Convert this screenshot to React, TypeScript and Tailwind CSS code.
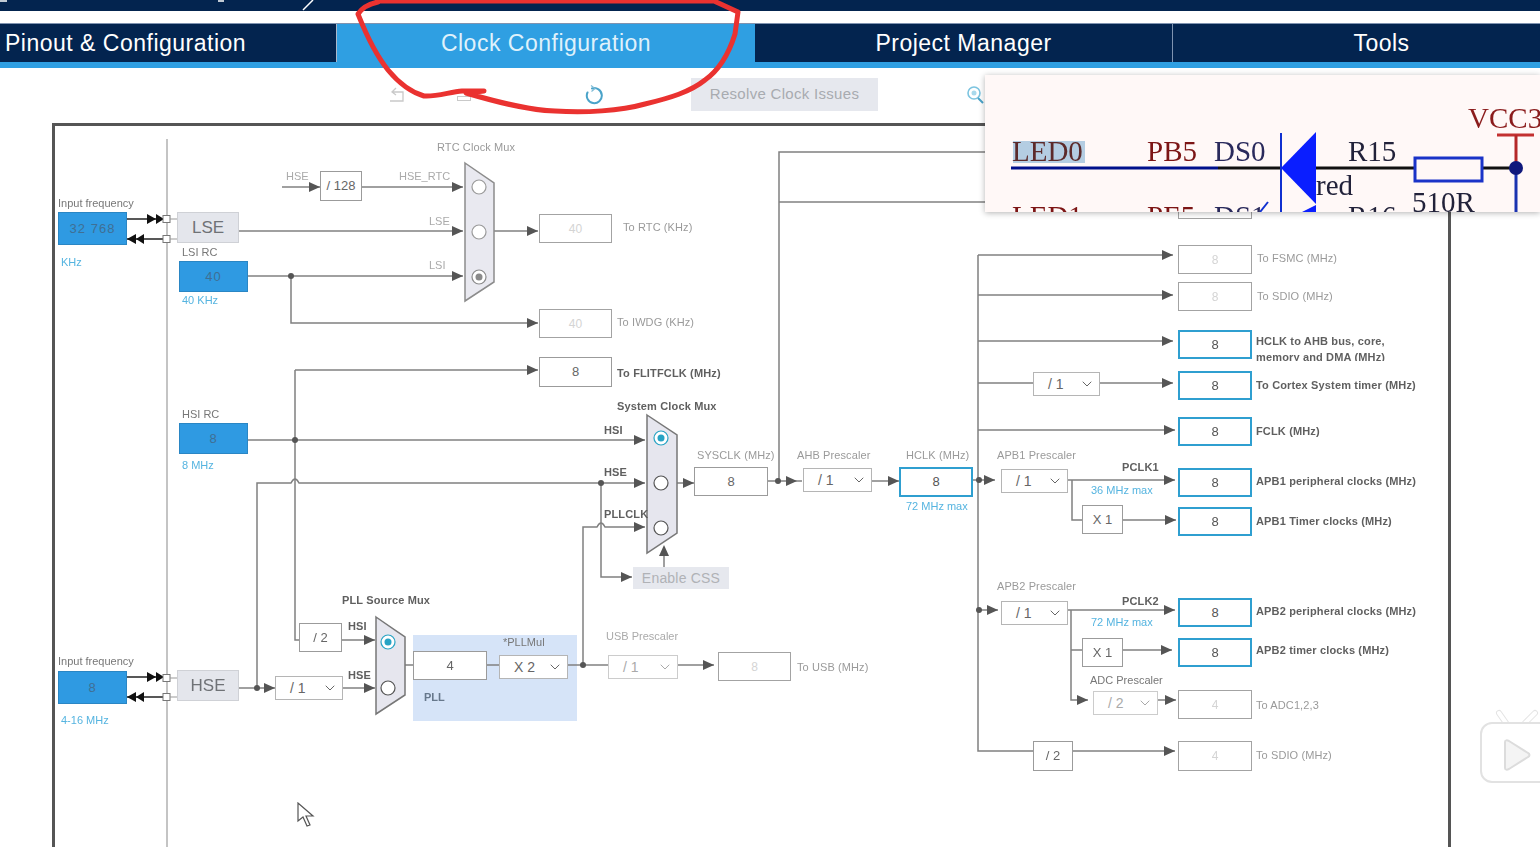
import { ChevronDown } from "lucide-react"

type BoxKind = "input" | "source" | "plain" | "off" | "on" | "select" | "selectOff" | "action"

interface NodeBox {
  x: number
  y: number
  w: number
  h: number
  text: string
  kind: BoxKind
}

const boxStyles: Record<BoxKind, string> = {
  input: "bg-[#2f9ae2] border border-[#2a86c4] text-[#3f6f94] text-[13px] tracking-[1px]",
  source: "bg-[#e4e6ec] border border-[#cfd1d6] text-[#6f7276] text-[17px]",
  plain: "bg-white border border-[#9b9b9b] text-[#666] text-[13px]",
  off: "bg-white border border-[#a3a3a3] text-[#d4d4d4] text-[12px]",
  on: "bg-white border-[2px] border-[#2f9fd0] text-[#555] text-[13px]",
  select: "bg-white border border-[#b5b5b5] text-[#666] text-[14px] justify-between pl-[14px] pr-[4px]",
  selectOff: "bg-white border border-[#cccccc] text-[#aaa] text-[14px] justify-between pl-[14px] pr-[4px]",
  action: "bg-[#e6e8ee] text-[#b0b2b6] text-[14px] tracking-[0.2px]",
}

const boxes: NodeBox[] = [
  { x: 58, y: 212, w: 69, h: 33, text: "32 768", kind: "input" },
  { x: 177, y: 212, w: 62, h: 31, text: "LSE", kind: "source" },
  { x: 179, y: 261, w: 69, h: 31, text: "40", kind: "input" },
  { x: 320, y: 171, w: 42, h: 30, text: "/ 128", kind: "plain" },
  { x: 539, y: 214, w: 73, h: 29, text: "40", kind: "off" },
  { x: 539, y: 309, w: 73, h: 29, text: "40", kind: "off" },
  { x: 539, y: 357, w: 73, h: 30, text: "8", kind: "plain" },
  { x: 179, y: 423, w: 69, h: 31, text: "8", kind: "input" },
  { x: 694, y: 467, w: 74, h: 29, text: "8", kind: "plain" },
  { x: 899, y: 467, w: 74, h: 30, text: "8", kind: "on" },
  { x: 633, y: 567, w: 96, h: 22, text: "Enable CSS", kind: "action" },
  { x: 58, y: 671, w: 69, h: 33, text: "8", kind: "input" },
  { x: 177, y: 670, w: 62, h: 31, text: "HSE", kind: "source" },
  { x: 299, y: 623, w: 43, h: 29, text: "/ 2", kind: "plain" },
  { x: 413, y: 651, w: 74, h: 29, text: "4", kind: "plain" },
  { x: 718, y: 652, w: 73, h: 29, text: "8", kind: "off" },
  { x: 1178, y: 190, w: 74, h: 29, text: "", kind: "off" },
  { x: 1178, y: 245, w: 74, h: 29, text: "8", kind: "off" },
  { x: 1178, y: 282, w: 74, h: 29, text: "8", kind: "off" },
  { x: 1178, y: 330, w: 74, h: 29, text: "8", kind: "on" },
  { x: 1178, y: 371, w: 74, h: 29, text: "8", kind: "on" },
  { x: 1178, y: 417, w: 74, h: 29, text: "8", kind: "on" },
  { x: 1178, y: 468, w: 74, h: 29, text: "8", kind: "on" },
  { x: 1178, y: 507, w: 74, h: 29, text: "8", kind: "on" },
  { x: 1082, y: 505, w: 41, h: 29, text: "X 1", kind: "plain" },
  { x: 1178, y: 598, w: 74, h: 29, text: "8", kind: "on" },
  { x: 1178, y: 638, w: 74, h: 29, text: "8", kind: "on" },
  { x: 1082, y: 638, w: 41, h: 29, text: "X 1", kind: "plain" },
  { x: 1178, y: 690, w: 74, h: 29, text: "4", kind: "off" },
  { x: 1178, y: 741, w: 74, h: 30, text: "4", kind: "off" },
  { x: 1033, y: 741, w: 40, h: 30, text: "/ 2", kind: "plain" },
]

const selects: NodeBox[] = [
  { x: 275, y: 676, w: 68, h: 24, text: "/ 1", kind: "select" },
  { x: 499, y: 655, w: 69, h: 24, text: "X 2", kind: "select" },
  { x: 608, y: 655, w: 70, h: 24, text: "/ 1", kind: "selectOff" },
  { x: 803, y: 468, w: 69, h: 24, text: "/ 1", kind: "select" },
  { x: 1033, y: 372, w: 67, h: 24, text: "/ 1", kind: "select" },
  { x: 1001, y: 469, w: 67, h: 24, text: "/ 1", kind: "select" },
  { x: 1001, y: 601, w: 67, h: 24, text: "/ 1", kind: "select" },
  { x: 1093, y: 691, w: 65, h: 24, text: "/ 2", kind: "selectOff" },
]

const grey = "text-[#9a9a9a] tracking-[0.1px]"
const dark = "text-[#5f5f5f] font-semibold tracking-[0.15px]"
const mid = "text-[#777]"
const blue = "text-[#55b4e0]"
const pale = "text-[#aaa]"

const labels: { x: number; y: number; text: string; tone: string }[] = [
  { x: 437, y: 147, text: "RTC Clock Mux", tone: grey },
  { x: 286, y: 176, text: "HSE", tone: pale },
  { x: 399, y: 176, text: "HSE_RTC", tone: pale },
  { x: 429, y: 221, text: "LSE", tone: pale },
  { x: 429, y: 265, text: "LSI", tone: pale },
  { x: 58, y: 203, text: "Input frequency", tone: mid },
  { x: 61, y: 262, text: "KHz", tone: blue },
  { x: 182, y: 252, text: "LSI RC", tone: mid },
  { x: 182, y: 300, text: "40 KHz", tone: blue },
  { x: 623, y: 227, text: "To RTC (KHz)", tone: grey },
  { x: 617, y: 322, text: "To IWDG (KHz)", tone: grey },
  { x: 617, y: 373, text: "To FLITFCLK (MHz)", tone: dark },
  { x: 617, y: 406, text: "System Clock Mux", tone: dark },
  { x: 182, y: 414, text: "HSI RC", tone: mid },
  { x: 182, y: 465, text: "8 MHz", tone: blue },
  { x: 604, y: 430, text: "HSI", tone: dark },
  { x: 604, y: 472, text: "HSE", tone: dark },
  { x: 604, y: 514, text: "PLLCLK", tone: dark },
  { x: 697, y: 455, text: "SYSCLK (MHz)", tone: grey },
  { x: 797, y: 455, text: "AHB Prescaler", tone: grey },
  { x: 906, y: 455, text: "HCLK (MHz)", tone: grey },
  { x: 906, y: 506, text: "72 MHz max", tone: blue },
  { x: 997, y: 455, text: "APB1 Prescaler", tone: grey },
  { x: 1122, y: 467, text: "PCLK1", tone: dark },
  { x: 1091, y: 490, text: "36 MHz max", tone: blue },
  { x: 1257, y: 258, text: "To FSMC (MHz)", tone: grey },
  { x: 1257, y: 296, text: "To SDIO (MHz)", tone: grey },
  { x: 1256, y: 385, text: "To Cortex System timer (MHz)", tone: dark },
  { x: 1256, y: 431, text: "FCLK (MHz)", tone: dark },
  { x: 1256, y: 481, text: "APB1 peripheral clocks (MHz)", tone: dark },
  { x: 1256, y: 521, text: "APB1 Timer clocks (MHz)", tone: dark },
  { x: 997, y: 586, text: "APB2 Prescaler", tone: grey },
  { x: 1122, y: 601, text: "PCLK2", tone: dark },
  { x: 1091, y: 622, text: "72 MHz max", tone: blue },
  { x: 1256, y: 611, text: "APB2 peripheral clocks (MHz)", tone: dark },
  { x: 1256, y: 650, text: "APB2 timer clocks (MHz)", tone: dark },
  { x: 1090, y: 680, text: "ADC Prescaler", tone: mid },
  { x: 1256, y: 705, text: "To ADC1,2,3", tone: grey },
  { x: 1256, y: 755, text: "To SDIO (MHz)", tone: grey },
  { x: 606, y: 636, text: "USB Prescaler", tone: pale },
  { x: 797, y: 667, text: "To USB (MHz)", tone: grey },
  { x: 342, y: 600, text: "PLL Source Mux", tone: dark },
  { x: 348, y: 626, text: "HSI", tone: dark },
  { x: 348, y: 675, text: "HSE", tone: dark },
  { x: 503, y: 642, text: "*PLLMul", tone: mid },
  { x: 424, y: 697, text: "PLL", tone: "text-[#67788c] font-semibold" },
  { x: 58, y: 661, text: "Input frequency", tone: mid },
  { x: 61, y: 720, text: "4-16 MHz", tone: blue },
]

// wires in page coordinates
const wires = [
  "M282 187 H320",
  "M362 187 H463",
  "M239 231 H463",
  "M248 276 H463",
  "M291 276 V323 H538",
  "M494 231 H538",
  "M295 370 H538",
  "M295 370 V640 H299",
  "M248 440 H645",
  "M257 688 V483 H291 Q295 475 299 483 H645",
  "M239 688 H275",
  "M343 688 H375",
  "M342 640 H375",
  "M405 665 H413",
  "M487 665 H499",
  "M568 665 H608",
  "M678 665 H714",
  "M583 665 V527 H597 Q601 519 605 527 H645",
  "M601 483 V577 H632",
  "M664 567 V547",
  "M677 483 H694",
  "M768 481 H802",
  "M779 481 V152 H985",
  "M779 202 H985",
  "M872 481 H899",
  "M973 480 H995",
  "M978 255 V751 H1033",
  "M978 255 H1173",
  "M978 295 H1173",
  "M978 341 H1173",
  "M978 383 H1033",
  "M1100 383 H1173",
  "M978 430 H1175",
  "M1068 480 H1175",
  "M1072 480 V520 H1082",
  "M1123 520 H1176",
  "M978 610 H998",
  "M1068 610 H1175",
  "M1071 610 V700 H1088",
  "M1071 650 H1082",
  "M1123 650 H1172",
  "M1158 700 H1176",
  "M1073 751 H1175",
]

const arrows: [number, number][] = [
  [320, 187], [463, 187], [463, 231], [463, 276], [538, 231], [538, 323], [538, 370],
  [645, 440], [645, 483], [645, 527], [632, 577], [694, 483], [375, 640], [375, 688], [275, 688],
  [714, 665], [797, 481], [899, 481], [995, 480], [1173, 255], [1173, 295], [1173, 341], [1173, 383],
  [1175, 430], [1175, 480], [1176, 520], [998, 610], [1175, 610], [1172, 650],
  [1088, 700], [1176, 700], [1175, 751],
]

const dots: [number, number][] = [
  [291, 276], [295, 440], [601, 483], [257, 688], [583, 665], [778, 481], [979, 480], [979, 610],
]

const radios: { x: number; y: number; on: boolean; tint: string }[] = [
  { x: 479, y: 187, on: false, tint: "#9a9a9a" },
  { x: 479, y: 232, on: false, tint: "#9a9a9a" },
  { x: 479, y: 277, on: true, tint: "#8a8a8a" },
  { x: 661, y: 438, on: true, tint: "#27a3c4" },
  { x: 661, y: 483, on: false, tint: "#555" },
  { x: 661, y: 528, on: false, tint: "#555" },
  { x: 388, y: 642, on: true, tint: "#27a3c4" },
  { x: 388, y: 688, on: false, tint: "#555" },
]

const tabs = [
  { label: "Clock Configuration", active: true },
  { label: "Project Manager", active: false },
  { label: "Tools", active: false },
]

const at = (x: number, y: number) => ({ left: x - 55, top: y - 126 })

const Node = ({ box }: { box: NodeBox }) => (
  <div
    className={`absolute flex items-center justify-center ${boxStyles[box.kind]}`}
    style={{ ...at(box.x, box.y), width: box.w, height: box.h }}
  >
    {box.text}
  </div>
)

const Select = ({ box }: { box: NodeBox }) => (
  <div
    className={`absolute flex items-center ${boxStyles[box.kind]}`}
    style={{ ...at(box.x, box.y), width: box.w, height: box.h }}
  >
    <span>{box.text}</span>
    <ChevronDown size={16} strokeWidth={1.5} />
  </div>
)

const Wiring = () => (
  <svg className="absolute left-0 top-0" width={1393} height={721} viewBox="55 126 1393 721" fill="none">
    <path d="M167 139 V847" stroke="#b0b0b0" strokeWidth={1.5} />
    <rect x={413} y={635} width={164} height={86} fill="#d6e4f8" />
    {wires.map((d) => (
      <path key={d} d={d} stroke="#808080" strokeWidth={1.5} />
    ))}
    {arrows.map(([x, y]) => (
      <polygon key={`${x}-${y}`} points={`${x},${y} ${x - 11},${y - 5} ${x - 11},${y + 5}`} fill="#555" />
    ))}
    <polygon points="664,545 659,556 669,556" fill="#555" />
    {dots.map(([x, y]) => (
      <circle key={`${x}-${y}`} cx={x} cy={y} r={3} fill="#555" />
    ))}

    {/* input / output pins of the two oscillators */}
    <path d="M127 219 H167 M127 239 H167 M127 677 H167 M127 697 H167" stroke="#222" strokeWidth={1.5} />
    <polygon points="147,214 147,224 156,219 156,214 164,219 156,224 156,219" fill="#111" />
    <polygon points="127,239 136,234 136,239 144,234 144,244 136,239 136,244" fill="#111" />
    <polygon points="147,672 147,682 156,677 156,672 164,677 156,682 156,677" fill="#111" />
    <polygon points="127,697 136,692 136,697 144,692 144,702 136,697 136,702" fill="#111" />
    {[219, 239, 678, 697].map((y) => (
      <rect key={y} x={163} y={y - 3.5} width={7} height={7} fill="#fff" stroke="#777" />
    ))}
    <path d="M170 219 H177 M170 239 H177 M170 678 H177 M170 697 H177" stroke="#999" />

    {/* muxes */}
    <polygon points="465,163 494,183 494,282 465,301" fill="#e9e9f0" stroke="#8c8c8c" strokeWidth={1.5} />
    <polygon points="647,415 677,435 677,533 647,553" fill="#e6e6ee" stroke="#777" strokeWidth={1.5} />
    <polygon points="376,617 405,637 405,695 376,714" fill="#e6e6ee" stroke="#777" strokeWidth={1.5} />
    {radios.map((r) => (
      <g key={`${r.x}-${r.y}`}>
        <circle cx={r.x} cy={r.y} r={7} fill="#fff" stroke={r.tint} strokeWidth={1.2} />
        {r.on && <circle cx={r.x} cy={r.y} r={3.5} fill={r.tint} />}
      </g>
    ))}
  </svg>
)

const Schematic = () => (
  <div className="absolute left-[985px] top-[75px] h-[137px] w-[555px] overflow-hidden bg-[#fff8f7] shadow-[0_1px_6px_rgba(0,0,0,0.3)]">
    <svg width={555} height={137} viewBox="985 75 555 137" className="font-['Liberation_Serif',serif]">
      <rect x={1013} y={141} width={72} height={22} fill="#b4cde2" />
      <path d="M1011 168 H1218" stroke="#00108c" strokeWidth={3} />
      <path d="M1218 168 H1281 M1316 168 H1414 M1482 168 H1516" stroke="#111" strokeWidth={3} />
      <rect x={1415} y={158} width={67} height={23} fill="none" stroke="#1a33c8" strokeWidth={3} />
      <path d="M1281 133 V212" stroke="#1030d0" strokeWidth={2} />
      <polygon points="1316,132 1316,204 1281,168" fill="#0a1eff" />
      <polygon points="1316,205 1316,212 1302,212" fill="#0a1eff" />
      <path d="M1260 212 L1268 202" stroke="#1030d0" strokeWidth={2} />
      <path d="M1497 135 H1534" stroke="#c33030" strokeWidth={3} />
      <path d="M1516 135 V168" stroke="#b52828" strokeWidth={3} />
      <path d="M1516 168 V212" stroke="#1a33b0" strokeWidth={3} />
      <circle cx={1516} cy={168} r={7} fill="#10187c" />
      <text x={1012} y={161} fontSize={29} fill="#5c2a2a">LED0</text>
      <text x={1147} y={161} fontSize={29} fill="#7c1515">PB5</text>
      <text x={1214} y={161} fontSize={29} fill="#2a2a5c">DS0</text>
      <text x={1348} y={161} fontSize={29} fill="#22223a">R15</text>
      <text x={1316} y={195} fontSize={29} fill="#22223a">red</text>
      <text x={1412} y={212} fontSize={29} fill="#22223a">510R</text>
      <text x={1468} y={128} fontSize={29} fill="#8b1c1c">VCC3</text>
      <text x={1012} y={226} fontSize={29} fill="#7c1515">LED1</text>
      <text x={1147} y={226} fontSize={29} fill="#7c1515">PE5</text>
      <text x={1214} y={226} fontSize={29} fill="#2a2a5c">DS1</text>
      <text x={1348} y={226} fontSize={29} fill="#22223a">R16</text>
    </svg>
  </div>
)

const App = () => {
  return (
    <div className="relative flex h-screen w-full flex-col overflow-hidden bg-white font-['Liberation_Sans',Arial,sans-serif]">
      {/* Title strip */}
      <div className="relative h-[11px] bg-[#03244f]">
        <svg className="absolute left-0 top-0" width={320} height={11} fill="none" stroke="#fff" strokeWidth={1.5}>
          <path d="M0 1 H7 M218 1 H224" />
          <path d="M303 10 L313 0" />
        </svg>
      </div>
      <div className="h-[12px] bg-white" />

      {/* Tabs */}
      <div className="flex h-[39px] border-t border-[#7f93b0] bg-[#03244f] text-[23px] tracking-[0.5px] text-white">
        <div className="flex w-[337px] shrink-0 items-center border-r border-[#aab8cc] pl-[5px]">Pinout &amp; Configuration</div>
        {tabs.map((tab) => (
          <div
            key={tab.label}
            className={`flex w-[418px] shrink-0 items-center justify-center ${
              tab.active ? "bg-[#2f9fe2] text-[#dff1fb]" : "border-r border-[#7f93b0]"
            }`}
          >
            {tab.label}
          </div>
        ))}
      </div>
      <div className="h-[6px] bg-[#2f9fe2]" />

      {/* Toolbar */}
      <div className="flex h-[55px] items-center pb-[2px] pl-[389px]">
        <svg width={16} height={16} fill="none" stroke="#c9c9c9" strokeWidth={1.3} viewBox="0 0 16 16">
          <path d="M7 1 L3 5 L7 8 M3 5 H14 V14 H1" />
        </svg>
        <div className="ml-[52px] mt-[8px] h-[5px] w-[14px] border border-[#c9c9c9]" />
        <svg className="ml-[114px]" width={18} height={20} fill="none" viewBox="0 0 18 20">
          <path d="M7 3.5 A7.5 7.5 0 1 1 2.5 7.5" stroke="#4aa3c9" strokeWidth={2} strokeLinecap="round" />
          <path d="M6 0.5 L10 3.5 L6.5 6.5" stroke="#7fbcd6" strokeWidth={1.2} />
        </svg>
        <div className="ml-[88px] flex h-[33px] w-[187px] items-center justify-center bg-[#e6e8ee] text-[15px] tracking-[0.3px] text-[#a8abb0]">
          Resolve Clock Issues
        </div>
        <svg className="ml-[88px]" width={18} height={18} fill="none" viewBox="0 0 18 18">
          <circle cx={8} cy={7} r={6} stroke="#7cc4e0" strokeWidth={1.6} />
          <circle cx={8} cy={7} r={2.5} fill="#a9d9ec" />
          <path d="M12 12 L17 17" stroke="#4aa3c9" strokeWidth={2} />
        </svg>
      </div>

      {/* Diagram */}
      <div className="relative ml-[52px] w-[1399px] flex-1 border-x-[3px] border-t-[3px] border-[#555] blur-[0.35px]">
        <Wiring />
        {boxes.map((box) => (
          <Node key={`${box.x}-${box.y}`} box={box} />
        ))}
        {selects.map((box) => (
          <Select key={`${box.x}-${box.y}`} box={box} />
        ))}
        {labels.map((label) => (
          <div
            key={`${label.x}-${label.y}`}
            className={`absolute -translate-y-1/2 whitespace-nowrap text-[11px] leading-none ${label.tone}`}
            style={at(label.x, label.y)}
          >
            {label.text}
          </div>
        ))}
        <div
          className="absolute h-[28px] overflow-hidden whitespace-nowrap text-[11px] font-semibold leading-[16px] tracking-[0.15px] text-[#5f5f5f]"
          style={at(1256, 333)}
        >
          HCLK to AHB bus, core,
          <br />
          memory and DMA (MHz)
        </div>
      </div>

      <Schematic />

      {/* Freehand annotation */}
      <svg className="absolute left-0 top-0" width={1540} height={130} fill="none">
        <path
          d="M378 2 C368 4 362 8 358 14 C362 24 372 50 388 70 C398 82 410 92 424 96 C436 97 450 92 462 91 L484 91 L466 93 C490 100 525 110 555 111 C585 113 620 111 645 104 C670 98 690 92 705 80 C722 68 730 50 735 34 L738 12 L714 1 L378 1"
          stroke="#ea3230"
          strokeWidth={5}
          strokeLinejoin="round"
          strokeLinecap="round"
        />
      </svg>

      {/* Mouse cursor */}
      <svg className="absolute left-[296px] top-[802px]" width={20} height={27} fill="#fff" stroke="#555" strokeWidth={1.2}>
        <path d="M2 1 L2 19 L7 15 L11 24 L14 23 L10 14 L17 14 Z" />
      </svg>

      {/* Video player badge */}
      <svg className="absolute left-[1476px] top-[708px]" width={64} height={80} fill="none">
        <path d="M23 5 L30 15 M59 5 L49 15" stroke="#e4e4e4" strokeWidth={6} strokeLinecap="round" />
        <path d="M23 5 L30 15 M59 5 L49 15" stroke="#fff" strokeWidth={4} strokeLinecap="round" />
        <rect x={5} y={15} width={80} height={59} rx={11} fill="#fff" stroke="#e2e2e2" strokeWidth={2} />
        <path d="M29 34 L29 60 C29 62 31 62 33 61 L52 49 C54 48 54 46 52 45 L33 33 C31 32 29 32 29 34 Z" fill="#f4f4f4" stroke="#dcdcdc" strokeWidth={2} />
      </svg>
    </div>
  )
}

export default App
